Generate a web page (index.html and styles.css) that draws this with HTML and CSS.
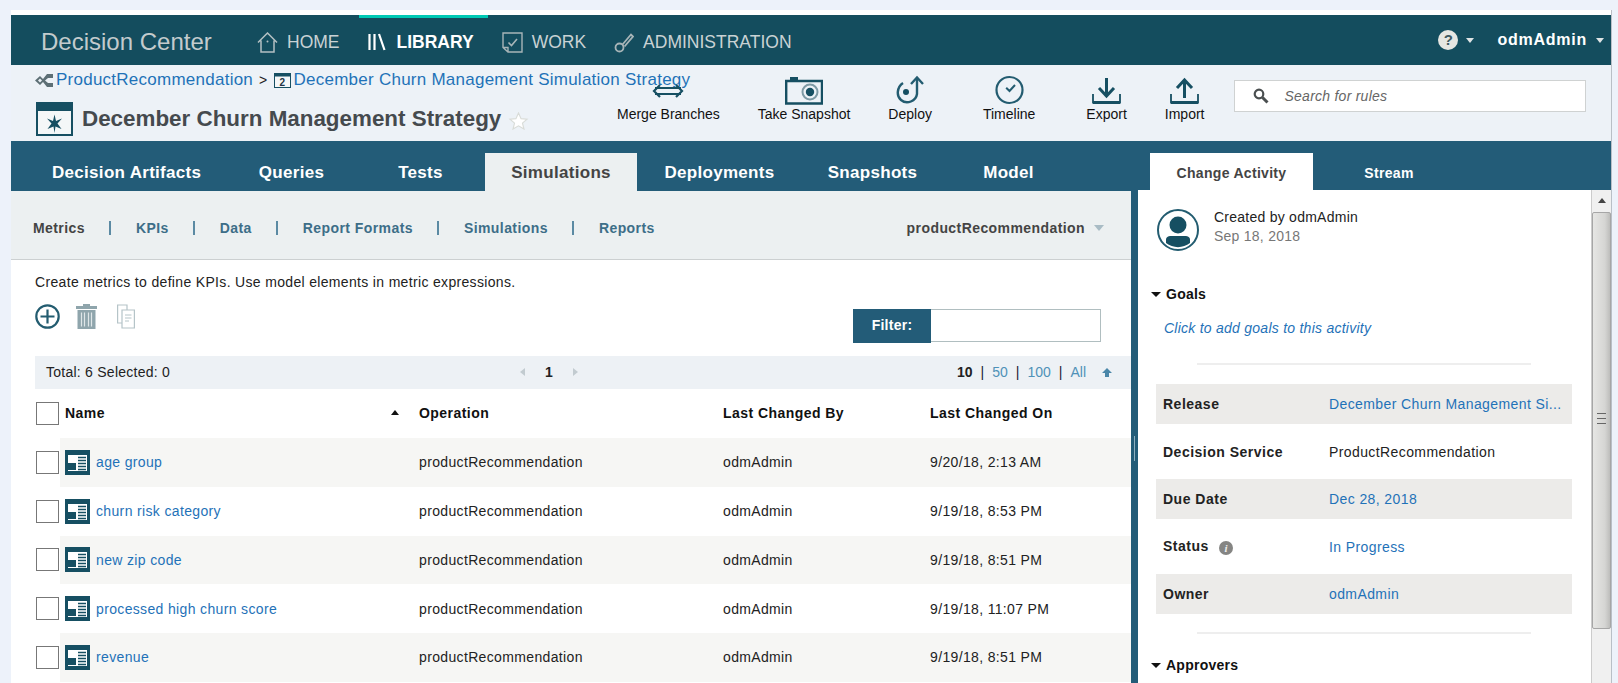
FILE: index.html
```html
<!DOCTYPE html>
<html>

<head>
  <meta charset="utf-8">
  <meta name="viewport" content="width=device-width, initial-scale=1.0">
  <title>Decision Center</title>
  <link rel="stylesheet" href="styles.css">
</head>

<body>
  <svg class="defs" width="0" height="0">
    <symbol id="metric-icon" viewBox="0 0 25 25">
      <rect width="25" height="25" fill="#164f62" />
      <rect x="3" y="5" width="19" height="16" fill="#fff" />
      <rect x="3" y="13" width="8" height="7" fill="#164f62" />
      <path d="M13 7.5H21M13 10.5H21M13 13.5H21M13 16.5H21M13 19.5H21" stroke="#164f62" stroke-width="1.3" />
    </symbol>
    <symbol id="caret" viewBox="0 0 10 6">
      <path d="M0 0H10L5 6Z" />
    </symbol>
  </svg>

  <div class="app">
    <div class="strip"></div>

    <!-- top nav -->
    <header class="topnav">
      <div class="logo">Decision Center</div>
      <a class="nav-item nav-home">
        <svg width="21" height="21" viewBox="0 0 21 21" fill="none" stroke="#b4c0c3" stroke-width="1.5"><path d="M1 10.5 10.5 1 20 10.5M4 8.5V20H17V8.5" /><circle cx="10.5" cy="9.5" r="1" fill="#b4c0c3" stroke="none" /></svg>
        HOME
      </a>
      <a class="nav-item nav-active">
        <svg class="lib-icon" width="18" height="18" viewBox="0 0 18 18" stroke="#fff" stroke-width="2.2" fill="none"><path d="M1.5 1V17M6.5 1V17M11 1 16.5 17" /></svg>
        LIBRARY
      </a>
      <a class="nav-item">
        <svg width="21" height="21" viewBox="0 0 21 21" fill="none" stroke="#a8b5b8" stroke-width="1.4"><path d="M1 1H20V20H6L1 15.5ZM1 15.5H6V20" /><path d="M6.5 10.5 9.5 13.5 15 7" stroke-width="1.6" /></svg>
        WORK
      </a>
      <a class="nav-item">
        <svg width="20" height="21" viewBox="0 0 20 21" fill="none" stroke="#a8b5b8" stroke-width="1.8"><circle cx="5.5" cy="15.5" r="4" /><path d="M8.5 12.5 17 2.5 19 4.5 10.5 14.5" /></svg>
        ADMINISTRATION
      </a>
      <div class="nav-right">
        <span class="help-icon">?</span>
        <svg class="nav-caret help-caret" width="8" height="5"><use href="#caret" /></svg>
        <span class="user-name">odmAdmin</span>
        <svg class="nav-caret" width="8" height="5"><use href="#caret" /></svg>
      </div>
    </header>

    <!-- breadcrumb, title, actions -->
    <section class="pagehead">
      <div class="head-left">
        <div class="crumbs">
          <svg width="18" height="15" viewBox="0 0 18 15" fill="#5d6f75"><path d="M0 7.5 5 3 8 6 12 1H18V5H13L10 7.5 13 10H18V14H12L8 9 5 12ZM3 7.5 5 9.5 7 7.5 5 5.5Z" fill-rule="evenodd" /></svg>
          <a class="crumb-link">ProductRecommendation</a>
          <span class="crumb-sep">&gt;</span>
          <svg width="17" height="15" viewBox="0 0 17 15"><rect x=".5" y=".5" width="16" height="14" fill="#f5f7f8" stroke="#164f62" /><rect width="17" height="3.5" fill="#164f62" /><text x="8.5" y="12.5" text-anchor="middle" class="cal-num">2</text></svg>
          <a class="crumb-link">December Churn Management Simulation Strategy</a>
        </div>
        <div class="title-row">
          <svg width="37" height="34" viewBox="0 0 37 34"><rect x="1" y="1" width="35" height="32" fill="#f4f7f8" stroke="#164f62" stroke-width="2" /><rect width="37" height="9" fill="#164f62" /><path d="M18.5 12.5 20 19 26 16.5 21.5 21.5 25.5 27 19.5 24.5 18.5 31 17.5 24.5 11.5 27 15.5 21.5 11 16.5 17 19Z" fill="#164f62" /></svg>
          <h1 class="page-title">December Churn Management Strategy</h1>
          <svg class="star" width="21" height="18" viewBox="0 0 20 19"><path d="M10 1 12.7 7 19 7.5 14.2 11.7 15.8 18 10 14.6 4.2 18 5.8 11.7 1 7.5 7.3 7Z" fill="#fff" stroke="#d9dcd8" stroke-width="1.2" /></svg>
        </div>
      </div>

      <div class="tools">
        <div class="tool">
          <svg width="32" height="30" viewBox="0 0 32 30" fill="none" stroke="#164f62" stroke-width="2.2"><path d="M8 10 2 16 8 22M24 10 30 16 24 22M3 13H29M3 19H29" /></svg>
          <span>Merge Branches</span>
        </div>
        <div class="tool">
          <svg width="38" height="30" viewBox="0 0 38 30" fill="none" stroke="#164f62"><path d="M1.2 6H37V28.5H1.2Z" stroke-width="2.4" /><rect x="5" y="2" width="8" height="4" fill="#164f62" stroke="none" /><circle cx="25" cy="17" r="7.5" stroke="#7e9aa5" stroke-width="2" /><circle cx="25" cy="17" r="4.2" fill="#164f62" stroke="none" /></svg>
          <span>Take Snapshot</span>
        </div>
        <div class="tool">
          <svg width="28" height="30" viewBox="0 0 28 30" fill="none" stroke="#235c70" stroke-width="2.4"><path d="M7 8C1 12 0 21 5 25 11 30 20 26 21 19V3" /><path d="M15 9 21 2.5 27 9" /><circle cx="10" cy="17" r="3" fill="#164f62" stroke="none" /></svg>
          <span>Deploy</span>
        </div>
        <div class="tool tool-wide">
          <svg width="29" height="30" viewBox="0 0 29 30" fill="none" stroke="#235c70" stroke-width="2.2"><circle cx="14.5" cy="15" r="13" /><path d="M11.2 12.7 14.5 16 20 10" stroke-width="2" /></svg>
          <span>Timeline</span>
        </div>
        <div class="tool">
          <svg width="29" height="30" viewBox="0 0 29 30" fill="none" stroke="#164f62"><path d="M1 19V27.5H28V19" stroke-width="1.8" /><path d="M1 27.5H28" stroke-width="3" /><path d="M14.5 3V21M7 13 14.5 21 22 13" stroke-width="3" /></svg>
          <span>Export</span>
        </div>
        <div class="tool">
          <svg width="29" height="30" viewBox="0 0 29 30" fill="none" stroke="#164f62"><path d="M1 19V27.5H28V19" stroke-width="1.8" /><path d="M1 27.5H28" stroke-width="3" /><path d="M14.5 23V6M7 13 14.5 5 22 13" stroke-width="3" /></svg>
          <span>Import</span>
        </div>
      </div>

      <div class="search">
        <svg width="16" height="16" viewBox="0 0 16 16" fill="none" stroke="#4a4f50"><circle cx="6" cy="6" r="4.3" stroke-width="2.2" /><path d="M9.5 9.5 14.5 14.5" stroke-width="3" /></svg>
        <span class="search-text">Search for rules</span>
      </div>
    </section>

    <!-- tabs -->
    <nav class="tabbar">
      <div class="tabs-left">
        <a class="tab tab-artifacts">Decision Artifacts</a>
        <a class="tab tab-queries">Queries</a>
        <a class="tab tab-tests">Tests</a>
        <a class="tab tab-sim tab-active">Simulations</a>
        <a class="tab tab-deploy">Deployments</a>
        <a class="tab tab-snap">Snapshots</a>
        <a class="tab tab-model">Model</a>
      </div>
      <div class="tabs-right">
        <a class="side-tab side-tab-active">Change Activity</a>
        <a class="side-tab">Stream</a>
      </div>
    </nav>

    <div class="main">
      <!-- left panel -->
      <main class="left-panel">
        <div class="subnav">
          <span class="sub-current">Metrics</span>
          <i class="sub-sep"></i>
          <a>KPIs</a>
          <i class="sub-sep"></i>
          <a>Data</a>
          <i class="sub-sep"></i>
          <a>Report Formats</a>
          <i class="sub-sep"></i>
          <a>Simulations</a>
          <i class="sub-sep"></i>
          <a>Reports</a>
          <div class="sub-project">
            productRecommendation
            <svg width="10" height="6" class="sub-caret"><use href="#caret" /></svg>
          </div>
        </div>

        <div class="content">
          <p class="intro">Create metrics to define KPIs. Use model elements in metric expressions.</p>

          <div class="actions">
            <div class="action-icons">
              <svg width="25" height="25" viewBox="0 0 25 25" fill="none" stroke="#235c70" stroke-width="2.2"><circle cx="12.5" cy="12.5" r="11.2" /><path d="M12.5 5.5V19.5M5.5 12.5H19.5" /></svg>
              <svg width="21" height="25" viewBox="0 0 21 25"><path d="M7 0H14V2H21V5H0V2H7Z" fill="#8fa5ac" /><path d="M1.5 6H19.5V25H1.5Z" fill="#8fa5ac" /><path d="M5.5 8.5V22.5M8.5 8.5V22.5M12.5 8.5V22.5M15.5 8.5V22.5" stroke="#dfe6e8" stroke-width="1.2" /></svg>
              <svg class="copy-icon" width="18" height="25" viewBox="0 0 18 25" fill="#fff" stroke="#b5c4c8" stroke-width="1.2"><path d="M.6 1H10V19H.6Z" /><path d="M5 6H17.4V24H5Z" /><path d="M8 11H14.5M8 14H14.5M8 17H12" stroke-width="1" /></svg>
            </div>
            <div class="filter">
              <span class="filter-label">Filter:</span>
              <span class="filter-input"></span>
            </div>
          </div>

          <div class="pagerbar">
            <div>Total: 6 Selected: 0</div>
            <div class="pager">
              <span class="tri-left"></span>
              <b>1</b>
              <span class="tri-right"></span>
            </div>
            <div class="page-sizes">
              <b>10</b><span class="bar">|</span><a>50</a><span class="bar">|</span><a>100</a><span class="bar">|</span><a>All</a>
              <svg class="top-arrow" width="10" height="10" viewBox="0 0 10 10" fill="#4a86a8"><path d="M5 1 10 6H7V10H3V6H0Z" /></svg>
            </div>
          </div>

          <div class="thead">
            <span class="check"></span>
            <div class="cells head-cells">
              <div class="name-head">Name <span class="sort-tri"></span></div>
              <div>Operation</div>
              <div>Last Changed By</div>
              <div>Last Changed On</div>
            </div>
          </div>

          <div class="rows">
            <div class="row">
              <span class="check"></span>
              <div class="cells">
                <div class="name-cell"><svg width="25" height="25"><use href="#metric-icon" /></svg><a>age group</a></div>
                <div>productRecommendation</div>
                <div>odmAdmin</div>
                <div>9/20/18, 2:13 AM</div>
              </div>
            </div>
            <div class="row">
              <span class="check"></span>
              <div class="cells">
                <div class="name-cell"><svg width="25" height="25"><use href="#metric-icon" /></svg><a>churn risk category</a></div>
                <div>productRecommendation</div>
                <div>odmAdmin</div>
                <div>9/19/18, 8:53 PM</div>
              </div>
            </div>
            <div class="row">
              <span class="check"></span>
              <div class="cells">
                <div class="name-cell"><svg width="25" height="25"><use href="#metric-icon" /></svg><a>new zip code</a></div>
                <div>productRecommendation</div>
                <div>odmAdmin</div>
                <div>9/19/18, 8:51 PM</div>
              </div>
            </div>
            <div class="row">
              <span class="check"></span>
              <div class="cells">
                <div class="name-cell"><svg width="25" height="25"><use href="#metric-icon" /></svg><a>processed high churn score</a></div>
                <div>productRecommendation</div>
                <div>odmAdmin</div>
                <div>9/19/18, 11:07 PM</div>
              </div>
            </div>
            <div class="row">
              <span class="check"></span>
              <div class="cells">
                <div class="name-cell"><svg width="25" height="25"><use href="#metric-icon" /></svg><a>revenue</a></div>
                <div>productRecommendation</div>
                <div>odmAdmin</div>
                <div>9/19/18, 8:51 PM</div>
              </div>
            </div>
          </div>
        </div>
      </main>

      <div class="splitter"><span class="splitter-grip"></span></div>

      <!-- right panel -->
      <aside class="side-panel">
        <div class="side-body">
          <div class="creator">
            <svg width="42" height="42" viewBox="0 0 42 42"><circle cx="21" cy="21" r="20" fill="#fff" stroke="#235c70" stroke-width="2" /><circle cx="21" cy="16" r="8.5" fill="#164f62" /><path d="M9 34V31C9 28 11 27 14 27H28C31 27 33 28 33 31V34C26 39.5 16 39.5 9 34Z" fill="#164f62" /></svg>
            <div class="creator-text">
              <div>Created by odmAdmin</div>
              <div class="created-date">Sep 18, 2018</div>
            </div>
          </div>

          <div class="section-head section-goals"><span class="tri-down"></span>Goals</div>
          <a class="add-goals">Click to add goals to this activity</a>
          <div class="divider divider-goals"></div>

          <div class="props">
            <div class="prop prop-shaded">
              <b>Release</b>
              <a class="prop-value">December Churn Management Si...</a>
            </div>
            <div class="prop">
              <b>Decision Service</b>
              <span class="prop-value">ProductRecommendation</span>
            </div>
            <div class="prop prop-shaded">
              <b>Due Date</b>
              <a class="prop-value">Dec 28, 2018</a>
            </div>
            <div class="prop">
              <b>Status <span class="info-icon">i</span></b>
              <a class="prop-value">In Progress</a>
            </div>
            <div class="prop prop-shaded">
              <b>Owner</b>
              <a class="prop-value">odmAdmin</a>
            </div>
          </div>

          <div class="divider divider-props"></div>
          <div class="section-head section-approvers"><span class="tri-down"></span>Approvers</div>
        </div>

        <div class="scrollbar">
          <div class="scroll-btn"><span class="scroll-up"></span></div>
          <div class="scroll-thumb"><span class="scroll-grip"></span></div>
        </div>
      </aside>
    </div>
  </div>
</body>

</html>
```

FILE: styles.css
```css
html, body {
  height: 683px;
  overflow: hidden;
}

body {
  font-family: "Liberation Sans", Arial, sans-serif;
  font-size: 14px;
  letter-spacing: 0.25px;
  background-color: #edf2fa;
  color: #222;
  margin: 0;
  padding: 10px 0 0 11px;
  box-sizing: border-box;
}

a {
  color: #1f72b8;
}

svg {
  flex-shrink: 0;
}

.defs {
  position: absolute;
}

.app {
  width: 1600px;
  height: 673px;
  overflow: hidden;
  border-right: 1px solid #b9bfc6;
}

.strip {
  height: 5px;
  background-color: #fff;
}

/* top nav */
.topnav {
  height: 50px;
  background-color: #144d5e;
  display: flex;
  align-items: stretch;
  padding-left: 30px;
  letter-spacing: 0;
}

.logo {
  font-size: 24px;
  color: #c3cbcd;
  line-height: 54px;
  margin-right: 30px;
  width: 172px;
  white-space: nowrap;
}

.nav-item {
  display: flex;
  align-items: center;
  gap: 9px;
  padding: 4px 14px 0;
  font-size: 17.5px;
  color: #c9d2d4;
}

.nav-home {
  margin-right: 5px;
}

.nav-active {
  padding: 4px 14px 0 9px;
  gap: 11px;
  color: #fff;
  font-weight: bold;
  box-shadow: inset 0 3px 0 #00c9b5;
}

.nav-right {
  margin-left: auto;
  display: flex;
  align-items: center;
  padding-right: 7px;
}

.help-icon {
  width: 20px;
  height: 20px;
  border-radius: 50%;
  background-color: #e6e6e2;
  color: #3f5960;
  font-weight: bold;
  font-size: 15px;
  line-height: 20px;
  text-align: center;
}

.nav-caret {
  fill: #dfe4e5;
  margin-left: 9px;
}

.help-caret {
  margin-left: 8px;
  margin-right: 23px;
}

.user-name {
  font-size: 16px;
  font-weight: bold;
  color: #fff;
  letter-spacing: 0.75px;
}

/* page head */
.pagehead {
  height: 76px;
  background-color: #edf2f7;
  display: flex;
  align-items: flex-start;
}

.head-left {
  width: 582px;
  padding: 6px 0 0 24px;
  flex-shrink: 0;
}

.crumbs {
  display: flex;
  align-items: center;
  gap: 3px;
  height: 18px;
  width: max-content;
  white-space: nowrap;
  font-size: 17px;
}

.crumb-sep {
  font-size: 14px;
  margin: 0 3px;
}

.cal-num {
  font-size: 10px;
  font-weight: bold;
  fill: #234;
}

.title-row {
  display: flex;
  align-items: center;
  margin-top: 12px;
  margin-left: 1px;
}

.page-title {
  font-size: 22.4px;
  line-height: 34px;
  letter-spacing: 0;
  margin: 1px 0 0 9px;
  color: #454a4e;
  white-space: nowrap;
}

.star {
  margin: 4px 0 0 7px;
}

.tools {
  display: flex;
  gap: 38px;
  padding-top: 10px;
  flex-shrink: 0;
  letter-spacing: 0;
}

.tool {
  display: flex;
  flex-direction: column;
  align-items: center;
  gap: 1px;
  color: #111;
  white-space: nowrap;
  line-height: 16px;
}

.tool-wide {
  margin: 0 13px;
}

.search {
  width: 352px;
  height: 32px;
  margin: 15px 0 0 30px;
  box-sizing: border-box;
  background-color: #fff;
  border: 1px solid #cfd2d2;
  display: flex;
  align-items: center;
  padding-left: 18px;
  gap: 15px;
}

.search-text {
  font-style: italic;
  color: #666;
}

/* tabs */
.tabbar {
  height: 50px;
  background-color: #235c78;
  display: flex;
  align-items: flex-end;
  font-weight: bold;
}

.tabs-left {
  display: flex;
  width: 1139px;
  flex-shrink: 0;
}

.tab {
  display: block;
  height: 38px;
  line-height: 40px;
  text-align: center;
  color: #fff;
  font-size: 17px;
  letter-spacing: 0.3px;
  white-space: nowrap;
}

.tab-artifacts { width: 216px; padding-left: 41px; box-sizing: border-box; text-align: left; }
.tab-queries { width: 129px; }
.tab-tests { width: 129px; }
.tab-sim { width: 152px; }
.tab-deploy { width: 165px; }
.tab-snap { width: 141px; }
.tab-model { width: 131px; }

.tab-active {
  background-color: #ecf0f1;
  color: #444;
}

.tabs-right {
  display: flex;
  height: 37px;
  margin-bottom: 1px;
}

.side-tab {
  display: block;
  width: 152px;
  line-height: 40px;
  text-align: center;
  color: #fff;
  letter-spacing: 0.3px;
  white-space: nowrap;
}

.side-tab-active {
  width: 163px;
  background-color: #fff;
  color: #444;
}

/* main area */
.main {
  display: flex;
  height: 492px;
}

.left-panel {
  width: 1120px;
  flex-shrink: 0;
  background-color: #fff;
}

.subnav {
  height: 69px;
  background-color: #ecf0f1;
  border-bottom: 1px solid #ccd0d1;
  box-sizing: border-box;
  display: flex;
  align-items: center;
  gap: 24.5px;
  padding: 5px 0 0 22px;
  font-weight: bold;
  letter-spacing: 0.42px;
}

.subnav a {
  color: #3d6e88;
}

.sub-current {
  color: #444;
}

.sub-sep {
  width: 2px;
  height: 14px;
  background-color: #5b8aa3;
}

.sub-project {
  margin-left: auto;
  padding-right: 27px;
  color: #444;
  display: flex;
  align-items: center;
  gap: 9px;
}

.sub-caret {
  fill: #a9bcc5;
}

.content {
  padding-left: 24px;
}

.intro {
  margin: 0;
  padding-top: 14px;
  line-height: 16px;
  color: #222;
  letter-spacing: 0.33px;
}

.actions {
  display: flex;
  justify-content: space-between;
  height: 66px;
  padding-top: 14px;
  box-sizing: border-box;
}

.action-icons {
  display: flex;
  gap: 16px;
  align-items: flex-start;
}

.copy-icon {
  margin-left: 4px;
}

.filter {
  display: flex;
  align-items: flex-start;
  margin: 5px 30px 0 0;
}

.filter-label {
  width: 78px;
  height: 34px;
  line-height: 33px;
  background-color: #235c78;
  color: #fff;
  font-weight: bold;
  text-align: center;
}

.filter-input {
  width: 170px;
  height: 33px;
  box-sizing: border-box;
  border: 1px solid #b0bec0;
  border-left: none;
}

.pagerbar {
  height: 33px;
  background-color: #edf1f5;
  display: grid;
  grid-template-columns: 474px 58px 1fr;
  align-items: center;
  padding: 0 0 1px 11px;
  box-sizing: border-box;
}

.pager {
  display: flex;
  align-items: center;
  justify-content: space-between;
}

.tri-left {
  border: 4px solid transparent;
  border-left: none;
  border-right: 5px solid #c2cbd0;
}

.tri-right {
  border: 4px solid transparent;
  border-right: none;
  border-left: 5px solid #c2cbd0;
}

.page-sizes {
  display: flex;
  justify-content: flex-end;
  align-items: center;
  padding-right: 19px;
  letter-spacing: 0;
}

.page-sizes a {
  color: #4f91b8;
}

.bar {
  margin: 0 8px;
  color: #223;
}

.top-arrow {
  margin-left: 16px;
}

.thead,
.row {
  display: flex;
  align-items: stretch;
}

.thead {
  height: 49px;
}

.row {
  height: 48.75px;
}

.check {
  display: block;
  width: 23px;
  height: 23px;
  margin: auto 1px;
  box-sizing: border-box;
  background-color: #fff;
  border: 1px solid #777;
  flex-shrink: 0;
}

.cells {
  flex: 1;
  display: grid;
  grid-template-columns: 359px 304px 207px 1fr;
  align-items: center;
  color: #222;
  letter-spacing: 0.35px;
}

.head-cells {
  font-weight: bold;
  color: #111;
  letter-spacing: 0.45px;
  padding-bottom: 2px;
}

.name-head {
  padding-left: 5px;
  padding-right: 20px;
  display: flex;
  justify-content: space-between;
  align-items: center;
}

.sort-tri {
  border: 4px solid transparent;
  border-top: none;
  border-bottom: 5px solid #111;
}

.row:nth-child(odd) .cells {
  background-color: #f6f6f4;
}

.name-cell {
  display: flex;
  align-items: center;
  gap: 6px;
  padding-left: 5px;
}

/* side panel */
.splitter {
  width: 7px;
  flex-shrink: 0;
  background-color: #235c78;
  display: flex;
  justify-content: center;
  padding-top: 245px;
  box-sizing: border-box;
}

.splitter-grip {
  width: 1px;
  height: 25px;
  background-color: #8fb0c0;
}

.side-panel {
  flex: 1;
  display: flex;
  margin-top: -1px;
  background-color: #fff;
}

.side-body {
  width: 453px;
  flex-shrink: 0;
}

.creator {
  display: flex;
  align-items: flex-start;
  gap: 15px;
  padding: 19px 0 0 19px;
  line-height: 19px;
}

.creator-text {
  margin-top: -1px;
}

.created-date {
  color: #777;
}

.section-head {
  font-weight: bold;
  color: #111;
  display: flex;
  align-items: center;
  padding-left: 13px;
  gap: 5px;
  line-height: 16px;
}

.section-goals {
  margin-top: 35px;
}

.section-approvers {
  margin-top: 23px;
}

.tri-down {
  border: 5px solid transparent;
  border-bottom: none;
  border-top: 5px solid #111;
}

.add-goals {
  display: block;
  font-style: italic;
  margin: 18px 0 0 26px;
  line-height: 16px;
}

.divider {
  height: 2px;
  background-color: #eeeeee;
  margin-left: 59px;
  width: 334px;
}

.divider-goals {
  margin-top: 27px;
  margin-bottom: 19px;
}

.divider-props {
  margin-top: 18px;
}

.props {
  margin-left: 18px;
  width: 416px;
}

.prop {
  height: 55px;
  display: grid;
  grid-template-columns: 166px 1fr;
  align-items: center;
  padding-left: 7px;
  box-sizing: border-box;
  letter-spacing: 0.5px;
}

.prop-shaded {
  height: 40px;
  background-color: #ecebe9;
}

.prop-value {
  white-space: nowrap;
  font-weight: normal;
  letter-spacing: 0.4px;
}

.info-icon {
  display: inline-block;
  width: 14px;
  height: 14px;
  margin-left: 6px;
  border-radius: 50%;
  background-color: #858583;
  color: #eee;
  font: italic bold 11px/14px "Liberation Serif", serif;
  text-align: center;
  vertical-align: -1px;
}

/* scrollbar */
.scrollbar {
  width: 20px;
  flex-shrink: 0;
  background-color: #f0f0f0;
  border-left: 1px solid #ccc;
  box-sizing: border-box;
}

.scroll-btn {
  height: 22px;
  display: flex;
  justify-content: center;
  padding-top: 8px;
  box-sizing: border-box;
}

.scroll-up {
  height: 0;
  border: 4px solid transparent;
  border-top: none;
  border-bottom: 5px solid #444;
}

.scroll-thumb {
  height: 417px;
  box-sizing: border-box;
  border: 1px solid #a6a6a6;
  border-radius: 2px;
  background: linear-gradient(to right, #e6e6e4, #d5d5d3 70%, #bdbdbb);
  padding-top: 200px;
  display: flex;
  justify-content: center;
}

.scroll-grip {
  width: 9px;
  height: 9px;
  border-top: 1px solid #666;
  border-bottom: 1px solid #666;
  background: linear-gradient(#666, #666) center / 100% 1px no-repeat;
}
```
